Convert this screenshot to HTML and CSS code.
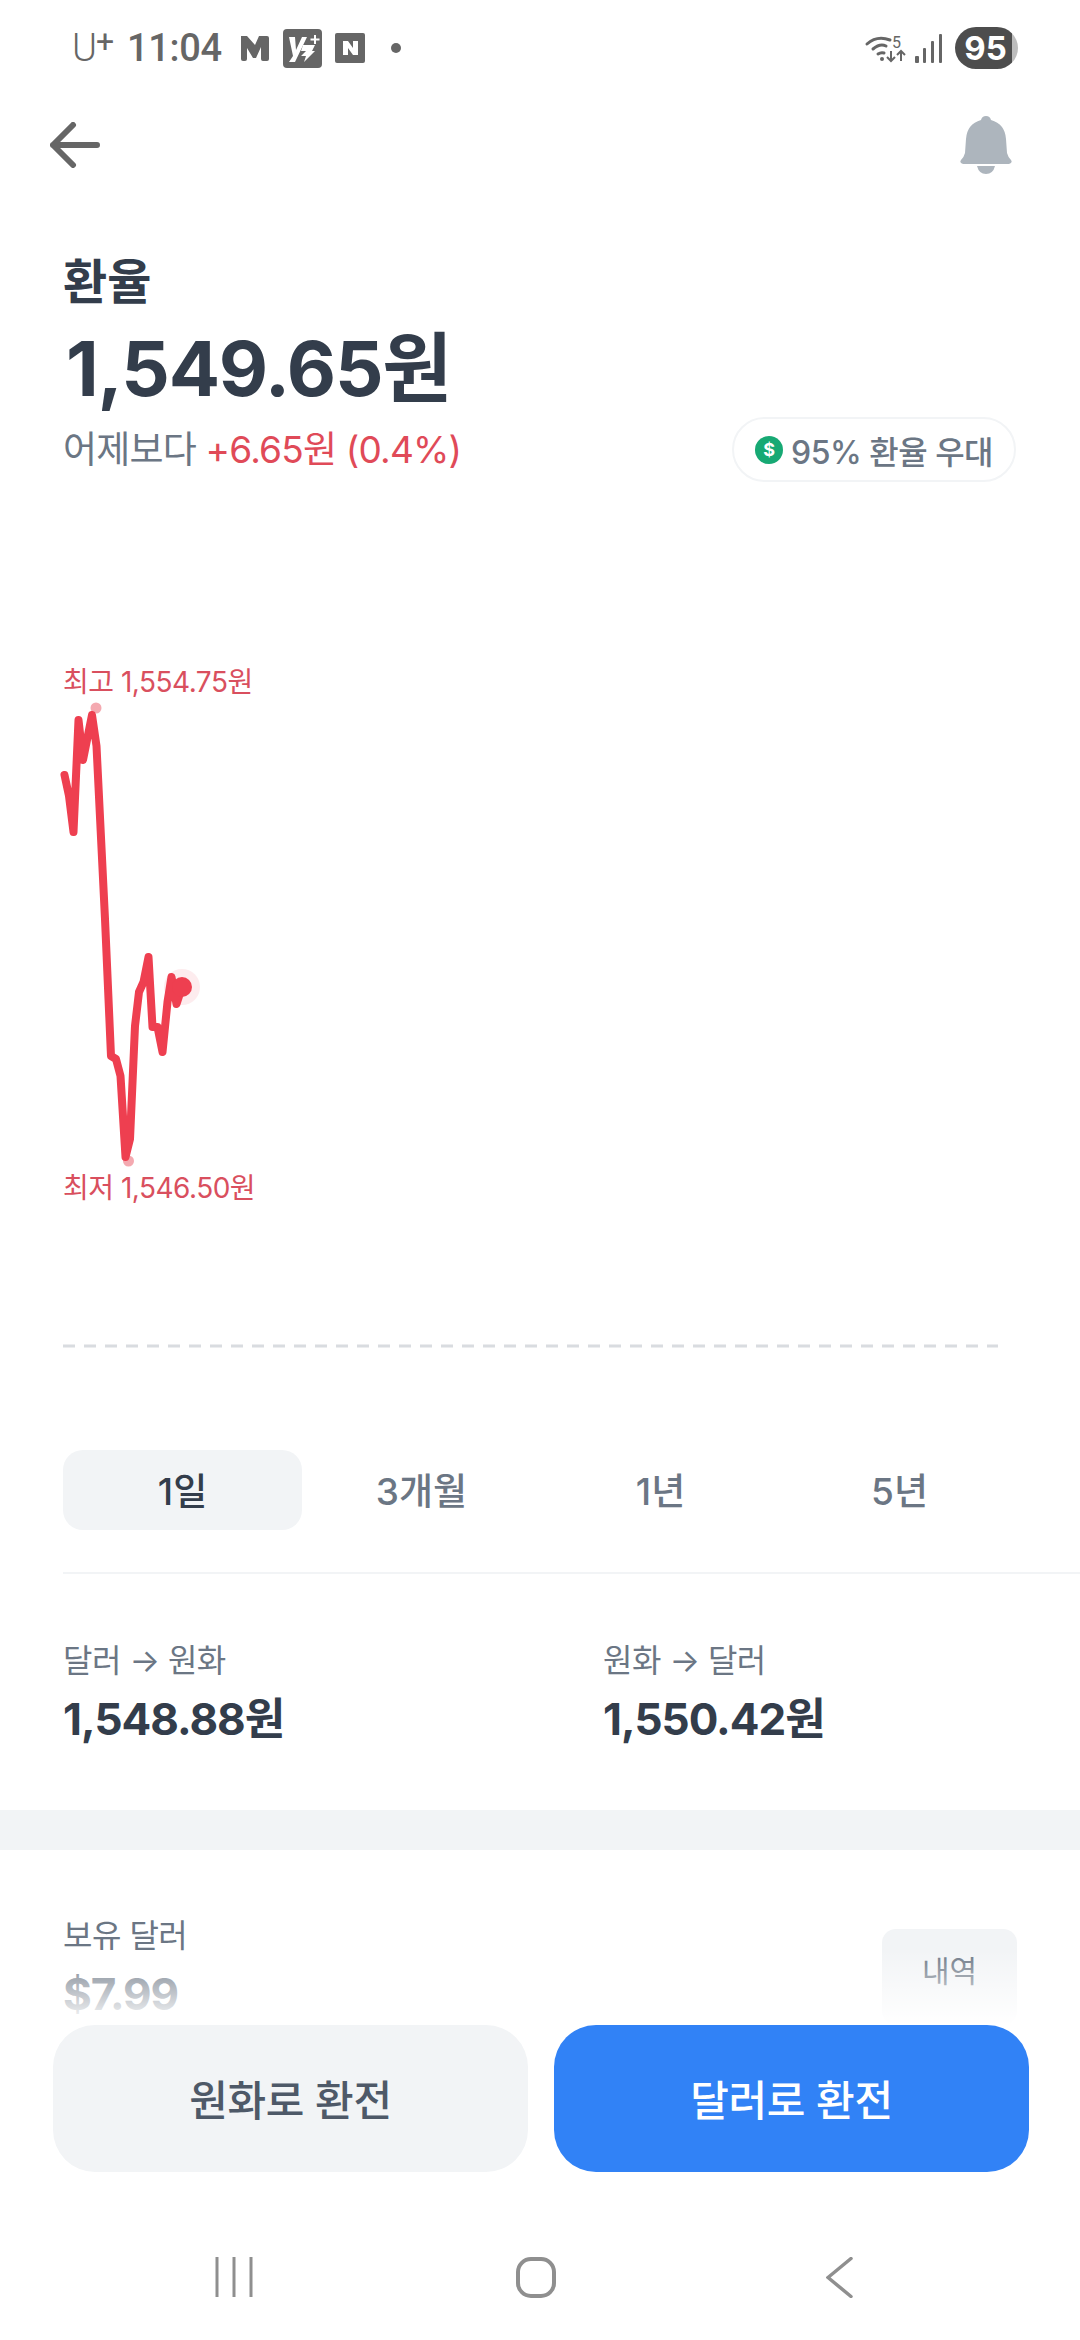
FILE: index.html
```html
<!DOCTYPE html>
<html lang="ko">
<head>
<meta charset="utf-8">
<title>환율</title>
<link rel="stylesheet" href="styles.css">
</head>
<body>
<div class="screen">
  <div class="status">
    <div class="status-left">
      <span class="carrier">U<sup>+</sup></span>
      <span class="clock">11:04</span>
      <svg class="ic-m" viewBox="0 0 28 26"><path fill="#666" d="M0 1h6l8 9 4-9h8q2 0 2 2v21q0 2-2 2h-4q-2 0-2-2V12l-5 11h-3L6 13v11q0 2-2 2H2q-2 0-2-2z"/></svg>
      <svg class="ic-v" viewBox="0 0 39 39"><rect width="39" height="39" rx="4" fill="#666"/><path fill="#fff" d="M6 8h6l1 13L19 8h5L12 33H6l4-6z"/><path fill="#fff" d="M20 16h12l-3 6h3L21 33l2-6h-5l5-5h-5z"/><path stroke="#fff" stroke-width="2" d="M32 6v9M27.500 10.500h9"/></svg>
      <svg class="ic-n" viewBox="0 0 30 30"><rect width="30" height="30" rx="2" fill="#666"/><path fill="#fff" d="M8 8h5l5 7V8h5v14h-5l-5-7v7H8z"/></svg>
      <span class="dot"></span>
    </div>
    <div class="status-right">
      <svg class="ic-wifi" viewBox="0 0 39 27"><g fill="none" stroke="#666" stroke-width="3" stroke-linecap="round"><path d="M1 9Q11 0 24 5"/><path d="M7 14q7-6 13-3"/><path d="M12 19q3-2 6-1"/></g><circle cx="16" cy="24" r="2" fill="#666"/><path fill="none" stroke="#666" stroke-width="2" d="M25 16v10M21 22l4 4 4-4M35 26V16M31 20l4-4 4 4"/><text x="26" y="13" class="wifi-five">5</text></svg>
      <svg class="ic-signal" viewBox="0 0 28 29"><g fill="#666"><rect x="0" y="22" width="4" height="7" rx="1"/><rect x="8" y="14" width="3" height="15" rx="1"/><rect x="16" y="7" width="3" height="22" rx="1"/><rect x="24" y="0" width="3" height="29" rx="1"/></g></svg>
      <div class="battery"><span class="battery-num">95</span></div>
    </div>
  </div>

  <div class="topbar">
    <svg class="ic-back" viewBox="0 0 50 46"><path fill="none" stroke="#666" stroke-width="6" stroke-linecap="round" stroke-linejoin="round" d="M23 3 3 23l20 20M3 23h44"/></svg>
    <svg class="ic-bell" viewBox="0 0 52 58"><path fill="#adb5bd" d="M26 0q4 0 5 4 14 4 15 19l1 14q1 4 4 7 2 3-2 4H3q-4-1-2-4 3-3 4-7l1-14Q7 8 21 4q1-4 5-4z"/><path fill="#adb5bd" d="M17 50h18q-2 8-9 8t-9-8z"/></svg>
  </div>

  <section class="summary">
    <h1 class="title">환율</h1>
    <div class="price">1,549.65원</div>
    <div class="change-row">
      <div class="change">어제보다 <span class="up">+6.65원 (0.4%)</span></div>
      <div class="pill">
        <span class="coin">$</span>
        <span>95% 환율 우대</span>
      </div>
    </div>
  </section>

  <section class="chart">
    <span class="chart-label high">최고 1,554.75원</span>
    <span class="chart-label low">최저 1,546.50원</span>
    <svg class="chart-svg" viewBox="0 0 1080 864" width="1080" height="864">
      <line x1="63" y1="862" x2="998" y2="862" stroke="#d9dce0" stroke-width="3" stroke-dasharray="12 9"/>
      <circle cx="96" cy="224" r="5.500" fill="#f4a9b0"/>
      <circle cx="128.500" cy="677" r="5.500" fill="#f4a9b0"/>
      <circle cx="182" cy="503" r="18" fill="#fdecee"/>
      <polyline fill="none" stroke="#ee3f50" stroke-width="8" stroke-linecap="round" stroke-linejoin="round" points="64.500,291 69,312 73.500,348 78.500,236 83,276 92,231 96.500,262 105,435 111,572 116,575 120.500,592 125.500,673 130,655 135,542 139,508 143.500,498 148.500,473 152.500,543 157.500,543 162.500,568 167.500,518 171.500,493 176.500,520 182,503"/>
      <circle cx="182" cy="503" r="10" fill="#ee3f50"/>
    </svg>
  </section>

  <nav class="tabs">
    <span class="tab active">1일</span>
    <span class="tab">3개월</span>
    <span class="tab">1년</span>
    <span class="tab">5년</span>
  </nav>

  <section class="rates">
    <div class="rate">
      <div class="rate-label">달러 → 원화</div>
      <div class="rate-value">1,548.88원</div>
    </div>
    <div class="rate">
      <div class="rate-label">원화 → 달러</div>
      <div class="rate-value">1,550.42원</div>
    </div>
  </section>

  <div class="band"></div>

  <section class="holding">
    <div>
      <div class="holding-label">보유 달러</div>
      <div class="holding-value">$7.99</div>
    </div>
    <span class="history">내역</span>
  </section>

  <div class="bottom">
    <div class="fade"></div>
    <div class="actions">
      <button class="btn gray">원화로 환전</button>
      <button class="btn blue">달러로 환전</button>
    </div>
    <div class="navbar">
      <svg class="nav-recent" viewBox="0 0 38 40"><path fill="none" stroke="#8f8f8f" stroke-width="3" d="M2 0v40M19 0v40M36 0v40"/></svg>
      <svg class="nav-home" viewBox="0 0 40 41"><rect x="2" y="2" width="36" height="37" rx="13" fill="none" stroke="#8f8f8f" stroke-width="4"/></svg>
      <svg class="nav-back" viewBox="0 0 27 41"><path fill="none" stroke="#8f8f8f" stroke-width="3.500" stroke-linecap="round" d="M25 1.500 2 20.500l23 19"/></svg>
    </div>
  </div>
</div>
</body>
</html>
```
FILE: styles.css
```css
* { box-sizing: border-box; margin: 0; padding: 0; }
html, body { width: 1080px; height: 2340px; overflow: hidden; background: #fff; }
body { font-family: Inter, "Noto Sans CJK KR", sans-serif; color: #333d4b; }
.screen { position: relative; width: 1080px; height: 2340px; overflow: hidden; background: #fff; }

.status { height: 96px; padding: 27px 62px 0 72px; display: flex; justify-content: space-between; align-items: flex-start; }
.status-left { display: flex; align-items: center; height: 42px; }
.status-right { display: flex; align-items: center; height: 42px; }
.carrier { font-family: Roboto, sans-serif; font-size: 38px; font-weight: 300; color: #666; line-height: 42px; width: 55px; letter-spacing: -1px; }
.carrier sup { font-size: 32px; font-weight: 400; line-height: 0; vertical-align: 9px; }
.clock { font-family: Roboto, sans-serif; font-size: 38px; font-weight: 500; color: #666; line-height: 42px; width: 114px; letter-spacing: -0.300px; }
.ic-m { width: 28px; height: 26px; margin-right: 14px; }
.ic-v { width: 39px; height: 39px; margin-right: 13px; }
.ic-n { width: 30px; height: 30px; margin-right: 26px; }
.dot { width: 10px; height: 10px; border-radius: 50%; background: #666; }
.ic-wifi { width: 39px; height: 27px; margin-right: 10px; overflow: visible; }
.wifi-five { font-family: Roboto, sans-serif; font-size: 16px; fill: #666; }
.ic-signal { width: 28px; height: 29px; margin-right: 12px; }
.battery { width: 63px; height: 42px; border-radius: 21px; background: linear-gradient(90deg, #4d4d4d 90%, #bdbdbd 90%); display: flex; align-items: center; justify-content: center; padding-right: 2px; }
.battery-num { font-family: Inter, sans-serif; font-size: 33px; font-weight: 700; color: #fff; line-height: 42px; }

.topbar { height: 72px; padding: 26px 68px 0 50px; display: flex; justify-content: space-between; align-items: flex-start; }
.ic-back { width: 50px; height: 46px; }
.ic-bell { width: 52px; height: 58px; margin-top: -6px; }

.summary { padding: 84px 64px 0 63px; }
.title { font-size: 48px; font-weight: 700; line-height: 60px; color: #333d4b; }
.price { font-size: 76px; font-weight: 700; line-height: 96px; margin: 8px 0 0 3px; color: #333d4b; letter-spacing: -1.200px; }
.change-row { display: flex; justify-content: space-between; align-items: center; margin-top: 1px; }
.change { font-size: 37px; color: #6b7684; line-height: 48px; letter-spacing: -0.800px; }
.up { color: #e04a58; }
.pill { width: 284px; height: 65px; border: 2px solid #f2f4f6; border-radius: 33px; display: flex; align-items: center; justify-content: center; gap: 8px; font-size: 32px; font-weight: 500; color: #6b7684; letter-spacing: -0.500px; }
.coin { width: 28px; height: 28px; border-radius: 50%; background: #17a974; color: #fff; font-size: 18px; font-weight: 700; line-height: 28px; text-align: center; }

.chart { position: relative; height: 864px; margin-top: 2px; }
.chart-svg { display: block; }
.chart-label { position: absolute; left: 63px; font-size: 28px; color: #d94f5e; line-height: 36px; letter-spacing: -0.500px; white-space: nowrap; }
.high { top: 180px; }
.low { top: 686px; }

.tabs { margin: 102px 61px 0 63px; display: grid; grid-template-columns: repeat(4, 1fr); }
.tab { height: 80px; padding-bottom: 3px; border-radius: 20px; display: flex; align-items: center; justify-content: center; font-size: 37px; font-weight: 500; color: #6b7684; }
.tab.active { background: #f2f4f6; color: #333d4b; }

.rates { margin: 42px 0 0 63px; padding-top: 65px; border-top: 2px solid #f2f4f6; display: grid; grid-template-columns: 540px 1fr; height: 238px; }
.rate-label { font-size: 32px; color: #6b7684; line-height: 44px; letter-spacing: -0.500px; }
.rate-value { font-size: 44px; font-weight: 700; line-height: 60px; margin-top: 6px; color: #333d4b; letter-spacing: -1px; }

.band { height: 40px; background: #f2f4f6; }

.holding { padding: 64px 63px 0; display: flex; justify-content: space-between; align-items: flex-start; }
.holding-label { font-size: 32px; color: #6b7684; line-height: 44px; letter-spacing: -0.500px; }
.holding-value { font-size: 44px; font-weight: 700; line-height: 60px; margin-top: 6px; color: #6b7684; letter-spacing: -1px; }
.history { width: 135px; height: 96px; margin-top: 15px; padding-bottom: 16px; border-radius: 14px; background: #f2f4f6; display: flex; align-items: center; justify-content: center; font-size: 30px; color: #6b7684; }

.bottom { position: absolute; left: 0; right: 0; bottom: 0; }
.fade { height: 75px; background: linear-gradient(180deg, rgba(255,255,255,0), #fff); }
.actions { background: #fff; padding: 0 51px 0 53px; display: flex; gap: 26px; height: 147px; }
.btn { flex: 1; height: 147px; border: 0; border-radius: 42px; font-family: inherit; font-size: 42px; font-weight: 500; letter-spacing: -0.300px; padding-bottom: 3px; }
.btn.gray { background: #f2f4f6; color: #4e5968; }
.btn.blue { background: #3182f6; color: #fff; }
.navbar { background: #fff; height: 168px; position: relative; }
.nav-recent { position: absolute; left: 215px; top: 85px; width: 38px; height: 40px; }
.nav-home { position: absolute; left: 516px; top: 85px; width: 40px; height: 41px; }
.nav-back { position: absolute; left: 826px; top: 85px; width: 27px; height: 41px; }
```
